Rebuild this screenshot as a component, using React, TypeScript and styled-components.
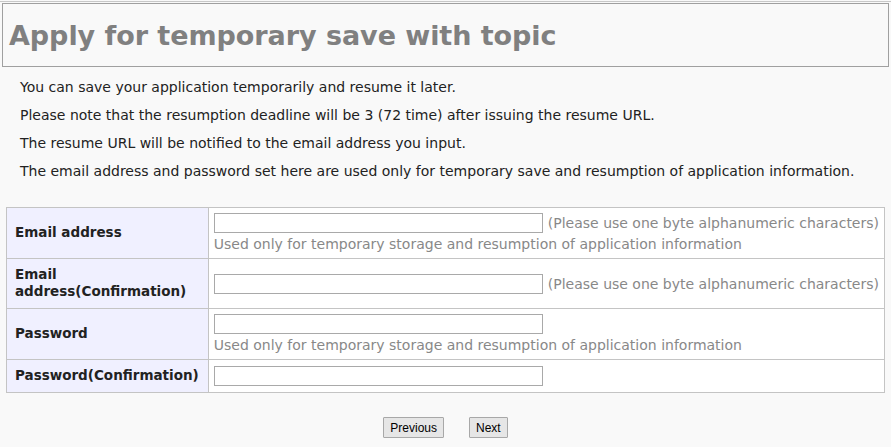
import React from "react";
import styled, { createGlobalStyle } from "styled-components";

const GlobalStyle = createGlobalStyle`
  html, body {
    margin: 0;
    padding: 0;
    background: #f9f9f9;
  }
  body {
    font-family: "DejaVu Sans", Verdana, sans-serif;
    color: #222;
  }
`;

const Page = styled.div`
  border-top: 1px solid #c8c8c8;
  margin-top: 1px;
  padding: 1px 2px 0 2px;
`;

const TitleBox = styled.div`
  border: 1px solid #a0a0a0;
  height: 62px;
  display: flex;
  align-items: center;
  padding-left: 6px;
`;

const Title = styled.h1`
  margin: 0;
  font-size: 27px;
  font-weight: bold;
  color: #808080;
  letter-spacing: -0.05px;
`;

const Intro = styled.div`
  padding: 6px 0 0 18px;
`;

const Line = styled.p`
  margin: 0;
  font-size: 14px;
  line-height: 28px;
`;

const Form = styled.table`
  margin: 22px 0 0 4px;
  width: 879px;
  border-collapse: collapse;
  background: #fff;
`;

const Label = styled.th`
  width: 185px;
  background: #f0f0ff;
  border: 1px solid #c4c4c4;
  text-align: left;
  padding: 7px 8px 8px;
  font-size: 13.5px;
  font-weight: bold;
  line-height: 17px;
`;

const Cell = styled.td<{ $tall?: boolean }>`
  border: 1px solid #c4c4c4;
  padding: ${(p) => (p.$tall ? "5px 5px 3px" : "5px 5px")};
  vertical-align: middle;
  font-size: 14px;
  color: #888;
`;

const FieldRow = styled.div`
  display: flex;
  align-items: center;
  height: 20px;
`;

const Field = styled.input`
  box-sizing: border-box;
  width: 329px;
  height: 20px;
  border: 1px solid #a9a9a9;
  background: #fff;
  margin: 0;
`;

const Hint = styled.span`
  margin-left: 5px;
  white-space: nowrap;
`;

const Note = styled.div`
  line-height: 22px;
  white-space: nowrap;
`;

const Buttons = styled.div`
  display: flex;
  justify-content: center;
  gap: 25px;
  margin-top: 24px;
`;

const Btn = styled.button`
  font-family: "Liberation Sans", Arial, sans-serif;
  font-size: 12px;
  color: #000;
  background: #e6e6e6;
  border: 1px solid #a8a8a8;
  border-radius: 1px;
  height: 21px;
  padding: 0 6px;
`;

const rows = [
  { label: "Email address", hint: true, note: true },
  { label: "Email address(Confirmation)", hint: true, note: false },
  { label: "Password", hint: false, note: true },
  { label: "Password(Confirmation)", hint: false, note: false },
];

const App = () => {
  return (
    <>
      <GlobalStyle />
      <Page>
        <TitleBox>
          <Title>Apply for temporary save with topic</Title>
        </TitleBox>
        <Intro>
          <Line>You can save your application temporarily and resume it later.</Line>
          <Line>
            Please note that the resumption deadline will be 3 (72 time) after issuing the
            resume URL.
          </Line>
          <Line>The resume URL will be notified to the email address you input.</Line>
          <Line>
            The email address and password set here are used only for temporary save and
            resumption of application information.
          </Line>
        </Intro>
        <Form>
          <tbody>
            {rows.map((r) => (
              <tr key={r.label}>
                <Label>{r.label}</Label>
                <Cell $tall={r.note}>
                  <FieldRow>
                    <Field type={r.label.startsWith("Password") ? "password" : "text"} />
                    {r.hint && <Hint>(Please use one byte alphanumeric characters)</Hint>}
                  </FieldRow>
                  {r.note && (
                    <Note>
                      Used only for temporary storage and resumption of application information
                    </Note>
                  )}
                </Cell>
              </tr>
            ))}
          </tbody>
        </Form>
        <Buttons>
          <Btn>Previous</Btn>
          <Btn>Next</Btn>
        </Buttons>
      </Page>
    </>
  );
};

export default App;
